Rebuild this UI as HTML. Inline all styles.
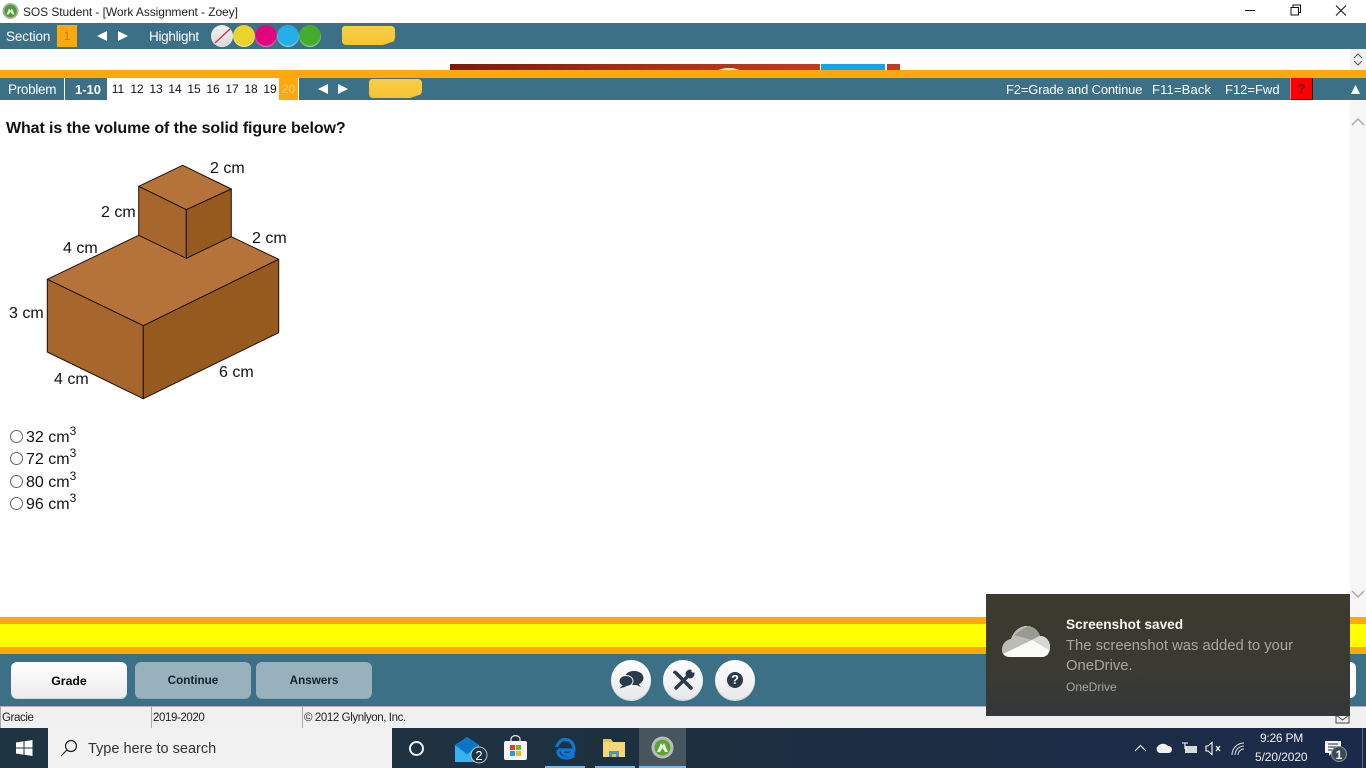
<!DOCTYPE html>
<html><head><meta charset="utf-8"><title>SOS Student</title>
<style>
html,body{margin:0;padding:0;width:1366px;height:768px;overflow:hidden;background:#fff}
body{position:relative;font-family:"Liberation Sans",sans-serif;color:#000}
.a{position:absolute}
.t{position:absolute;white-space:nowrap;line-height:1}
.w{color:#fff}
.n{position:absolute;top:78px;height:22px;line-height:22px;font-size:12px;text-align:center;width:19px;color:#111;margin-left:.5px}
.c{position:absolute;top:25px;width:22px;height:22px;border-radius:50%;box-shadow:inset 0 -1px 1px rgba(255,255,255,.5)}
.note{position:absolute;width:53px;height:19px;border-radius:3px 4px 8px 4px;background:linear-gradient(#f9cf45,#f8c331)}
.note::after{content:"";position:absolute;right:0;bottom:0;width:0;height:0;border-left:12px solid transparent;border-bottom:4px solid #3c7087}
.btn{position:absolute;top:662px;width:116px;height:36px;border-radius:6px;text-align:center;line-height:38px;font-weight:bold;font-size:11.700px}
.rb{position:absolute;top:660px;width:40px;height:40px;border-radius:50%;background:linear-gradient(#fff,#e8e8e8);box-shadow:0 1px 0 0 #cfdde3}
.st{position:absolute;top:707px;height:21px;line-height:23px;font-size:11.500px;letter-spacing:-.4px;background:#f0f0f0;border-left:1px solid #a9a9a9;box-sizing:border-box;padding-left:1px;color:#222}
.ans{position:absolute;left:26px;font-size:16px;line-height:18px;color:#111;white-space:nowrap}
.ans sup{font-size:12px;line-height:0;vertical-align:7px}
.r{position:absolute;left:10px;width:11px;height:11px;border:1px solid #666;border-radius:50%;background:#fff}
.lb{font-family:"Liberation Sans",sans-serif;font-size:16px;fill:#111}
</style></head><body>

<!-- title bar -->
<svg class="a" style="left:2px;top:2px" width="17" height="18" viewBox="0 0 17 17"><circle cx="8.500" cy="8.500" r="8" fill="#a9b0a9"/><circle cx="8.500" cy="8.500" r="6.200" fill="#4f9a35"/><path d="M4.500 12 L7 6 L8.500 8 L10 6 L12.500 12 L10.500 12 L8.500 9.500 L6.500 12Z" fill="#e8f2e0"/></svg>
<div class="t" style="left:23px;top:6px;font-size:12px;color:#222;letter-spacing:-.08px">SOS Student - [Work Assignment - Zoey]</div>
<svg class="a" style="left:1240px;top:0" width="120" height="22" fill="none" stroke="#111" stroke-width="1"><path d="M5 10.500H15"/><path d="M51 7.500h7.500v7.500h-7.500z M53 7.500v-2.500h7.500v7.500h-2"/><path d="M96 5.500l10 10M106 5.500l-10 10"/></svg>

<!-- top teal bar -->
<div class="a" style="left:0;top:23px;width:1366px;height:26px;background:#3c7087"></div>
<div class="t w" style="left:6px;top:30px;font-size:13.500px;letter-spacing:-.1px">Section</div>
<div class="a" style="left:57px;top:25px;width:20px;height:22px;background:#fba90d;color:#c97f10;font-size:12px;text-align:center;line-height:22px">1</div>
<svg class="a" style="left:96px;top:30px" width="34" height="12" fill="#fff"><path d="M1 6L11 1V11Z"/><path d="M22 1L32 6L22 11Z"/></svg>
<div class="t w" style="left:149px;top:30px;font-size:13.500px;letter-spacing:-.3px">Highlight</div>
<div class="c" style="left:211px;background:linear-gradient(#f2f2f2,#d8d8d8)"></div>
<svg class="a" style="left:211px;top:25px" width="22" height="22"><path d="M4 18L19 4" stroke="#d23a4a" stroke-width="1.500"/></svg>
<div class="c" style="left:233px;background:#ecd42f"></div>
<div class="c" style="left:255px;background:#e0047f"></div>
<div class="c" style="left:277px;background:#27aee8"></div>
<div class="c" style="left:299px;background:#46ad2c"></div>
<div class="note" style="left:342px;top:26px"></div>

<!-- banner strip -->
<svg class="a" style="left:450px;top:64px" width="450" height="6"><defs><linearGradient id="g" x1="0" x2="1" y1="0" y2="0"><stop offset="0" stop-color="#7a1a10"/><stop offset=".5" stop-color="#a82c1c"/><stop offset="1" stop-color="#c23a28"/></linearGradient></defs><rect width="370" height="6" fill="url(#g)"/><ellipse cx="279" cy="12" rx="16" ry="8" fill="#f6e9e3"/><rect x="371" width="64" height="6" fill="#12a5ef"/><rect x="437" width="13" height="6" fill="#c23a28"/></svg>

<!-- right scroller -->
<div class="a" style="left:1350px;top:49px;width:16px;height:21px;background:#f1f1f1"></div>
<svg class="a" style="left:1350px;top:49px" width="16" height="21" fill="none" stroke="#555" stroke-width="1"><path d="M4 9l4-4l4 4M4 12l4 4l4-4"/></svg>

<!-- orange + problem bar -->
<div class="a" style="left:0;top:70px;width:1366px;height:8px;background:#fba90d"></div>
<div class="a" style="left:0;top:78px;width:1366px;height:22px;background:#3c7087"></div>
<div class="t w" style="left:8px;top:83px;font-size:13.500px;letter-spacing:-.3px">Problem</div>
<div class="a" style="left:64px;top:78px;width:1px;height:22px;background:#fff"></div>
<div class="t w" style="left:75px;top:83px;font-size:13px;font-weight:bold">1-10</div>
<div class="a" style="left:107px;top:78px;width:172px;height:22px;background:#fff"></div>
<div class="n" style="left:108px">11</div><div class="n" style="left:127px">12</div><div class="n" style="left:146px">13</div><div class="n" style="left:165px">14</div><div class="n" style="left:184px">15</div><div class="n" style="left:203px">16</div><div class="n" style="left:222px">17</div><div class="n" style="left:241px">18</div><div class="n" style="left:260px">19</div>
<div class="n" style="left:279px;width:19px;margin-left:0;background:#fba90d;color:#f6cb7a">20</div>
<div class="a" style="left:298px;top:78px;width:1px;height:22px;background:#fff"></div>
<svg class="a" style="left:317px;top:83px" width="34" height="12" fill="#fff"><path d="M1 6L11 1V11Z"/><path d="M21 1L31 6L21 11Z"/></svg>
<div class="note" style="left:369px;top:79px"></div>
<div class="t w" style="left:1006px;top:83px;font-size:13px;letter-spacing:-.17px">F2=Grade and Continue</div>
<div class="t w" style="left:1152px;top:83px;font-size:13px;letter-spacing:.15px">F11=Back</div>
<div class="t w" style="left:1225px;top:83px;font-size:13px">F12=Fwd</div>
<div class="a" style="left:1290px;top:78px;width:23px;height:22px;background:#f00;box-sizing:border-box;border-right:1px solid #222;border-bottom:1px solid #222;border-left:1px solid #f77;text-align:center;line-height:21px;font-weight:bold;font-size:13px;color:#600">?</div>
<svg class="a" style="left:1350px;top:84px" width="12" height="11"><path d="M1 10L5.500 1L10 10Z" fill="#fff"/></svg>

<!-- main scrollbar -->
<div class="a" style="left:1350px;top:100px;width:16px;height:517px;background:#f6f6f6"></div>
<svg class="a" style="left:1350px;top:114px" width="16" height="14" fill="none" stroke="#aaa" stroke-width="1.500"><path d="M2 11L8 5L14 11"/></svg>
<svg class="a" style="left:1350px;top:588px" width="16" height="14" fill="none" stroke="#aaa" stroke-width="1.500"><path d="M2 3L8 9L14 3"/></svg>

<!-- question -->
<div class="t" style="left:6px;top:121px;font-size:16px;font-weight:bold;color:#111;letter-spacing:-.1px">What is the volume of the solid figure below?</div>

<svg class="a" style="left:0;top:150px" width="300" height="260" viewBox="0 150 300 260">
<g stroke="#1c1006" stroke-width="1" stroke-linejoin="round">
<path d="M47.300 279.300L138.700 235.300L231.300 236.700L278.700 259.300L143.300 325.700Z" fill="#b5733a"/>
<path d="M47.300 279.300L143.300 325.700V398.700L47.300 352Z" fill="#a7662b"/>
<path d="M143.300 325.700L278.700 259.300V332.700L143.300 398.700Z" fill="#96591e"/>
<path d="M138.700 186.300L182.700 165.300L231.300 189L186.300 209.700Z" fill="#b5733a"/>
<path d="M138.700 186.300L186.300 209.700V258.300L138.700 235.300Z" fill="#a7662b"/>
<path d="M186.300 209.700L231.300 189V236.700L186.300 258.300Z" fill="#96591e"/>
</g>
<text class="lb" x="210" y="173">2 cm</text>
<text class="lb" x="101" y="217">2 cm</text>
<text class="lb" x="63" y="253">4 cm</text>
<text class="lb" x="252" y="243">2 cm</text>
<text class="lb" x="9" y="318">3 cm</text>
<text class="lb" x="54" y="384">4 cm</text>
<text class="lb" x="219" y="377">6 cm</text>
</svg>

<!-- answers -->
<div class="r" style="top:430px"></div><div class="ans" style="top:429px">32 cm<sup>3</sup></div>
<div class="r" style="top:452px"></div><div class="ans" style="top:451px">72 cm<sup>3</sup></div>
<div class="r" style="top:475px"></div><div class="ans" style="top:474px">80 cm<sup>3</sup></div>
<div class="r" style="top:497px"></div><div class="ans" style="top:496px">96 cm<sup>3</sup></div>

<!-- yellow band -->
<div class="a" style="left:0;top:617px;width:1366px;height:7px;background:#fba90d"></div>
<div class="a" style="left:0;top:624px;width:1366px;height:23px;background:#ff0"></div>
<div class="a" style="left:0;top:647px;width:1366px;height:7px;background:#fba90d"></div>
<div class="a" style="left:0;top:654px;width:1366px;height:52px;background:#3c7087"></div>

<!-- buttons -->
<div class="btn" style="left:11px;background:linear-gradient(#fff,#ececec);box-shadow:0 1px 0 #cfdde3;width:116px;font-size:12.300px">Grade</div>
<div class="btn" style="left:135px;background:#98b1bc;box-shadow:0 1px 0 #8aa6b2;color:#14222c">Continue</div>
<div class="btn" style="left:256px;background:#98b1bc;box-shadow:0 1px 0 #8aa6b2;color:#14222c">Answers</div>

<div class="rb" style="left:611px"></div>
<svg class="a" style="left:611px;top:660px" width="40" height="40" fill="#2b3a4a"><ellipse cx="23" cy="18" rx="9.500" ry="7"/><path d="M27 23l3 4l-6-2.500Z"/><ellipse cx="15" cy="21" rx="7" ry="5.500" stroke="#f5f5f5" stroke-width="1"/><path d="M12 25l-3.500 3.500l7-2Z"/></svg>
<div class="rb" style="left:663px"></div>
<svg class="a" style="left:663px;top:660px" width="40" height="40" fill="none" stroke="#2b3a4a" stroke-linecap="round"><path d="M13 13L28 28" stroke-width="3.600"/><path d="M12 11.500l-1 1" stroke-width="2"/><path d="M13 28L26 15" stroke-width="3.400"/><circle cx="27" cy="14" r="4.500" fill="#2b3a4a" stroke="none"/><path d="M29 12L33 8" stroke="#f6f6f6" stroke-width="3" stroke-linecap="butt"/></svg>
<div class="rb" style="left:715px"></div>
<div class="a" style="left:727px;top:672px;width:16px;height:16px;border-radius:50%;background:#2b3a4a;color:#fff;font-weight:bold;font-size:13px;line-height:16px;text-align:center">?</div>

<!-- status bar -->
<div class="a" style="left:0;top:706px;width:1366px;height:22px;background:#f0f0f0;border-top:1px solid #b9a9b9;box-sizing:border-box"></div>
<div class="st" style="left:0;width:150px">Gracie</div>
<div class="st" style="left:151px;width:149px">2019-2020</div>
<div class="st" style="left:302px;width:200px">© 2012 Glynlyon, Inc.</div>

<!-- taskbar -->
<div class="a" style="left:0;top:728px;width:1366px;height:40px;background:linear-gradient(90deg,#1f3442,#1d3040 50%,#1b2a4a)"></div>
<svg class="a" style="left:16px;top:740px" width="17" height="16" fill="#fff"><path d="M0 2.500L7.500 1.300V7.500H0Z M8.500 1.200L16.500 0V7.500H8.500Z M0 8.500H7.500V14.700L0 13.500Z M8.500 8.500H16.500V16L8.500 14.800Z"/></svg>
<div class="a" style="left:48px;top:728px;width:344px;height:40px;background:#f2f2f2"></div>
<svg class="a" style="left:59px;top:739px" width="20" height="19" fill="none" stroke="#222" stroke-width="1.200"><circle cx="12" cy="7" r="5.500"/><path d="M8 11L2 17"/></svg>
<div class="t" style="left:88px;top:742px;font-size:14.500px;color:#333">Type here to search</div>
<div class="a" style="left:409px;top:741px;width:11px;height:11px;border:2px solid #f2f2f2;border-radius:50%"></div>

<svg class="a" style="left:454px;top:735px" width="36" height="30"><path d="M1 10L13 2L25 10V27H1Z" fill="#29a6e8"/><path d="M1 10L13 19L25 10L13 2Z" fill="#0a76c8"/><path d="M1 27L1 11L13 20L25 11V27Z" fill="#3ab2f0"/><circle cx="25" cy="20" r="8" fill="#1f3442" stroke="#b9c4cc"/><text x="25" y="25" text-anchor="middle" fill="#fff" font-size="13" font-family="Liberation Sans">2</text></svg>
<svg class="a" style="left:503px;top:735px" width="25" height="26"><rect x="1" y="6" width="23" height="19" rx="2" fill="#f6f6f6"/><path d="M8 8V4a4 3 0 0 1 9 0V8" fill="none" stroke="#e8e8e8" stroke-width="1.200"/><rect x="7" y="10" width="5" height="5" fill="#e2402a"/><rect x="13" y="10" width="5" height="5" fill="#7ab800"/><rect x="7" y="16" width="5" height="5" fill="#12a5ef"/><rect x="13" y="16" width="5" height="5" fill="#fbb900"/></svg>
<svg class="a" style="left:555px;top:737px" width="22" height="23"><path d="M3 13H19C19 6 15 2.500 10 2.500C6 2.500 3 6 1.500 10M3 13C2.500 18 6 21 11 21C14 21 16.500 20 18 19V15.500C16 17 13.500 17.500 11.500 17.500C8.500 17.500 7 15.500 7 13" fill="none" stroke="#0a78d7" stroke-width="3.200"/></svg>
<svg class="a" style="left:602px;top:737px" width="24" height="22"><path d="M1 2H9L11 5H23V20H1Z" fill="#e8c14a"/><rect x="1" y="5" width="22" height="15" fill="#f5d774"/><rect x="7" y="14" width="10" height="6" fill="#4c93c7"/><rect x="10" y="17" width="4" height="3" fill="#e8c14a"/></svg>
<div class="a" style="left:639px;top:728px;width:47px;height:40px;background:#47555f"></div>
<div class="a" style="left:639px;top:766px;width:47px;height:2px;background:#76b9ed"></div>
<div class="a" style="left:545px;top:766px;width:40px;height:2px;background:#76b9ed"></div>
<div class="a" style="left:595px;top:766px;width:40px;height:2px;background:#76b9ed"></div>
<svg class="a" style="left:651px;top:736px" width="23" height="23"><circle cx="11.500" cy="11.500" r="11" fill="#b7bdb7"/><circle cx="11.500" cy="11.500" r="8" fill="#5aa532"/><path d="M6 16L10 7L11.500 9.500L13 7L17 16L14 16L11.500 12L9 16Z" fill="#e8f2e0"/></svg>

<!-- tray -->
<svg class="a" style="left:1133px;top:740px" width="125" height="18" fill="none" stroke="#fff" stroke-width="1.100"><path d="M2 11L7.500 5.500L13 11"/><path d="M27 13a4 4 0 0 1-2-7a6 5 0 0 1 10 0a3.500 3.500 0 0 1 4 3.500a3.500 3.500 0 0 1-3 3.500Z" fill="#f2f2f2" stroke="none"/><rect x="52" y="6" width="12" height="7" fill="#d8d8d8" stroke="none"/><path d="M49 3h6M52 3v6M52 9h2" /><path d="M73 6H75L79 2.500V14.500L75 11H73Z"/><path d="M83 6l4 5M87 6l-4 5"/><path d="M99 15a12 12 0 0 1 12-12M102 15a9 9 0 0 1 9-9M105 15a6 6 0 0 1 6-6" stroke="#e0e0e0" stroke-width="1"/></svg>
<div class="t" style="left:1260px;top:732px;font-size:12px;color:#f2f2f2;letter-spacing:-.25px">9:26 PM</div>
<div class="t" style="left:1255px;top:751px;font-size:12px;color:#f2f2f2;letter-spacing:-.1px">5/20/2020</div>
<svg class="a" style="left:1324px;top:739px" width="24" height="24"><path d="M1 2H17V14H8L5 17V14H1Z" fill="#f6f6f6"/><path d="M4 5H14M4 8H14M4 11H11" stroke="#1b2a4a"/><circle cx="15" cy="15" r="7.500" fill="#3f4a55" stroke="#8c959c"/><text x="15" y="20" text-anchor="middle" fill="#fff" font-size="12" font-weight="bold" font-family="Liberation Sans">1</text></svg>
<div class="a" style="left:1362px;top:728px;width:1px;height:40px;background:#5b6b82"></div>

<!-- behind toast peeks -->
<div class="a" style="left:1345px;top:662px;width:11px;height:36px;background:#fff;border-radius:0 6px 6px 0"></div>
<svg class="a" style="left:1335px;top:714px" width="16" height="10" fill="none" stroke="#444"><path d="M1 1H14V9H1ZM1 1L7.500 6L14 1"/></svg>

<!-- toast -->
<div class="a" style="left:986px;top:594px;width:364px;height:122px;background:linear-gradient(#3d3a2f,#3a3a30 60%,#34383a)"></div>
<svg class="a" style="left:1002px;top:626px" width="48" height="31"><defs><clipPath id="cl"><path d="M8 31C2 31 0 27 0 24C0 18 4 14 9 13C12 5 18 0 25 0C31 0 36 4 38 10C44 10 48 15 48 21C48 27 45 31 40 31Z"/></clipPath></defs><g clip-path="url(#cl)"><rect width="48" height="31" fill="#fbfbf8"/><path d="M0 0H22L30 14L3 27L0 28Z" fill="#bcbcb5"/><path d="M12 9L25 0L40 0L38 10L30 14Z" fill="#9a9a94"/><path d="M30 14L38 10L48 10V24L47 24Z" fill="#d8d8d2"/></g></svg>
<div class="t" style="left:1066px;top:618px;font-size:13.700px;font-weight:bold;color:#f6f6f2">Screenshot saved</div>
<div class="t" style="left:1066px;top:639px;font-size:14.800px;color:#a7a79c">The screenshot was added to your</div>
<div class="t" style="left:1066px;top:659px;font-size:14.800px;color:#a7a79c">OneDrive.</div>
<div class="t" style="left:1066px;top:681px;font-size:12px;color:#a7a79c">OneDrive</div>

</body></html>
